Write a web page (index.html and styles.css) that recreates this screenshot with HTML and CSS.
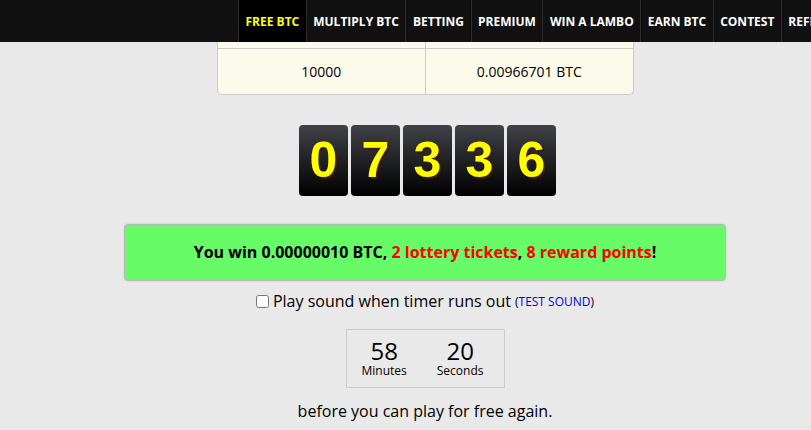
FILE: index.html
```html
<!DOCTYPE html>
<html lang="en">
<head>
	<meta charset="UTF-8">
	<title>Free BTC</title>
	<link rel="stylesheet" href="styles.css">
</head>
<body>
	<div class="topbar">
		<div class="logo-space"></div>
		<ul class="menu">
			<li class="active">FREE BTC</li>
			<li>MULTIPLY BTC</li>
			<li>BETTING</li>
			<li>PREMIUM</li>
			<li>WIN A LAMBO</li>
			<li>EARN BTC</li>
			<li>CONTEST</li>
			<li>REFER</li>
		</ul>
	</div>
	<div class="page">
		<table class="payout">
			<tr class="cut">
				<td></td>
				<td></td>
			</tr>
			<tr>
				<td>10000</td>
				<td>0.00966701 BTC</td>
			</tr>
		</table>

		<div class="digits">
			<span>0</span>
			<span>7</span>
			<span>3</span>
			<span>3</span>
			<span>6</span>
		</div>

		<div class="result">
			You win 0.00000010 BTC, <span class="red">2 lottery tickets</span>, <span class="red">8 reward points</span>!
		</div>

		<div class="sound">
			<input type="checkbox" id="sound">
			<label for="sound">Play sound when timer runs out</label>
			<span class="small">(<a href="#">TEST SOUND</a>)</span>
		</div>

		<div class="timer">
			<div class="unit">
				<span class="num">58</span>
				<span class="lbl">Minutes</span>
			</div>
			<div class="unit">
				<span class="num">20</span>
				<span class="lbl">Seconds</span>
			</div>
		</div>

		<p class="again">before you can play for free again.</p>
	</div>
</body>
</html>
```

FILE: styles.css
```css
body{
	margin: 0;
	background-color: #e9e9e9;
	font-family: "Open Sans", "DejaVu Sans", sans-serif;
	color: #000;
	overflow: hidden;
}
.topbar{
	display: flex;
	height: 42px;
	background-color: #111;
	overflow: hidden;
}
.logo-space{
	flex: 0 0 238px;
}
.menu{
	display: flex;
	margin: 0;
	padding: 0;
	list-style: none;
	border-left: 1px solid #2c2c2c;
}
.menu li{
	display: flex;
	align-items: center;
	padding: 0 6.5px;
	color: #fff;
	font-size: 12px;
	font-weight: bold;
	white-space: nowrap;
	border-right: 1px solid #2c2c2c;
}
.menu li.active{
	background-color: #000;
	color: #ffff00;
}
.page{
	width: 850px;
	display: flex;
	flex-direction: column;
	align-items: center;
}
.payout{
	width: 417px;
	border-collapse: separate;
	border-spacing: 0;
	background-color: #fcfaeb;
	border: 1px solid #ccc;
	border-top: none;
	border-radius: 0 0 5px 5px;
	font-size: 14px;
}
.payout td{
	width: 50%;
	text-align: center;
	height: 45px;
	padding: 0;
}
.payout td + td{
	border-left: 1px solid #ccc;
}
.payout .cut td{
	height: 6px;
	border-bottom: 1px solid #ccc;
}
.digits{
	display: flex;
	gap: 3px;
	margin-top: 30px;
	margin-left: 5px;
}
.digits span{
	width: 49px;
	height: 71px;
	border-radius: 4px;
	background: linear-gradient(#404247, #000);
	color: #ffff00;
	font-family: "Liberation Sans", Arial, sans-serif;
	font-weight: bold;
	font-size: 50px;
	line-height: 71px;
	text-align: center;
	text-shadow: 2px 2px 1px #3a1a00;
}
.result{
	box-sizing: border-box;
	width: 602px;
	margin-top: 28px;
	padding: 17px 0;
	background-color: #67fb67;
	border: 1px solid #bbb;
	border-radius: 4px;
	box-shadow: 0 0 2px rgba(0,0,0,0.15);
	text-align: center;
	font-weight: bold;
	font-size: 16px;
	line-height: 21px;
}
.red{
	color: #ff0000;
}
.sound{
	margin-top: 9px;
	font-size: 16px;
	display: flex;
	align-items: center;
}
.sound input{
	margin: 0 4px 0 0;
	width: 13px;
	height: 13px;
}
.small{
	font-size: 12px;
	margin-left: 4px;
}
.small a{
	color: #0000ee;
	text-decoration: none;
}
.timer{
	display: flex;
	gap: 30px;
	width: 159px;
	box-sizing: border-box;
	margin-top: 17px;
	padding: 8px 0 10px 15px;
	border: 1px solid #ccc;
}
.unit{
	display: flex;
	flex-direction: column;
	align-items: center;
}
.num{
	font-size: 24px;
	line-height: 26px;
}
.lbl{
	font-size: 12px;
	line-height: 13px;
}
.again{
	margin: 12px 0 0;
	font-size: 16px;
}
```
